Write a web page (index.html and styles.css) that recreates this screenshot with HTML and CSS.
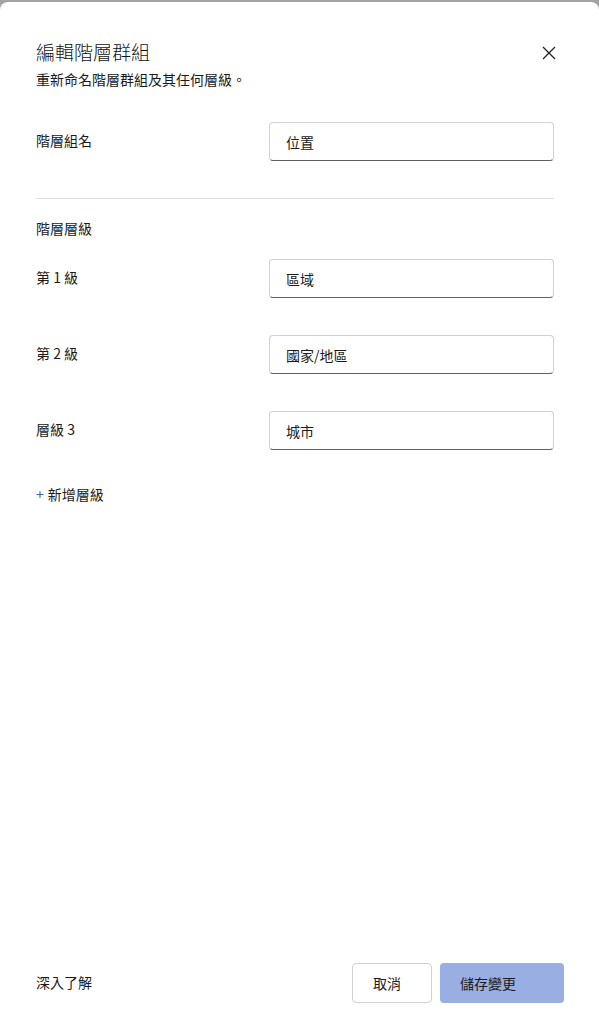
FILE: index.html
```html
<!DOCTYPE html>
<html lang="zh-Hant">
<head>
    <meta charset="UTF-8">
    <title>編輯階層群組</title>
    <link rel="stylesheet" href="styles.css">
</head>
<body>
    <div class="panel">
        <div class="kopf">
            <h1 class="tittel">編輯階層群組</h1>
            <button class="lukk" aria-label="關閉">
                <svg width="14" height="14" viewBox="0 0 14 14"><path d="M1 1L13 13M13 1L1 13" stroke="#222" stroke-width="1.3" fill="none"/></svg>
            </button>
        </div>
        <p class="under">重新命名階層群組及其任何層級。</p>

        <div class="rad forste">
            <label class="etikett">階層組名</label>
            <input class="felt" type="text" value="位置">
        </div>

        <hr class="skille">

        <div class="seksjon">階層層級</div>

        <div class="rad">
            <label class="etikett">第 1 級</label>
            <input class="felt" type="text" value="區域">
        </div>
        <div class="rad">
            <label class="etikett">第 2 級</label>
            <input class="felt" type="text" value="國家/地區">
        </div>
        <div class="rad">
            <label class="etikett">層級 3</label>
            <input class="felt" type="text" value="城市">
        </div>

        <div class="nyNiva"><span class="pluss">+</span>新增層級</div>

        <div class="fot">
            <span class="lesMer">深入了解</span>
            <div class="knapper">
                <button class="btnAvbryt">取消</button>
                <button class="btnLagre">儲存變更</button>
            </div>
        </div>
    </div>
</body>
</html>
```

FILE: styles.css
```css
html, body {
    margin: 0;
    height: 100%;
}

body {
    background-color: #a3a3a3;
    padding-top: 2px;
    box-sizing: border-box;
    font-family: "Noto Sans CJK TC", "Noto Sans", sans-serif;
    color: #1b1b1b;
    font-size: 14px;
}

/* selve dialogen */
.panel {
    background-color: #ffffff;
    border-radius: 8px 8px 0 0;
    height: 100%;
    box-sizing: border-box;
    padding: 0 45px 0 36px;
    display: flex;
    flex-direction: column;
}

.kopf {
    display: flex;
    justify-content: space-between;
    align-items: center;
    padding-top: 36px;
    height: 28px;
}

.tittel {
    margin: 0;
    font-size: 19px;
    font-weight: 300;
    line-height: 28px;
    color: #111;
}

.lukk {
    border: none;
    background: none;
    padding: 0;
    width: 14px;
    height: 14px;
    margin-right: -2px;
    margin-top: 2px;
    display: flex;
}

.under {
    margin: 3px 0 0 0;
    line-height: 20px;
}

.rad {
    display: flex;
    justify-content: space-between;
    align-items: center;
    margin-top: 38px;
}

.forste {
    margin-top: 33px;
}

.etikett {
    line-height: 20px;
    margin-top: -3px;
}

.felt {
    width: 285px;
    height: 39px;
    box-sizing: border-box;
    border: 1px solid #d1d1d1;
    border-bottom: 1px solid #616161;
    border-radius: 4px;
    padding: 0 16px;
    font-family: inherit;
    font-size: 14px;
    color: #1b1b1b;
}

.skille {
    border: none;
    border-top: 1px solid #e0e0e0;
    margin: 37px 0 0 0;
    width: 518px;
}

.seksjon {
    margin-top: 19px;
    line-height: 20px;
}

.rad + .rad {
    margin-top: 37px;
}

.seksjon + .rad {
    margin-top: 21px;
}

.nyNiva {
    margin-top: 34px;
    line-height: 20px;
}

.pluss {
    color: #3a5fcd;
    margin-right: 4px;
}

/* knapper nederst */
.fot {
    margin-top: auto;
    margin-bottom: 32px;
    margin-right: -10px;
    display: flex;
    justify-content: space-between;
    align-items: center;
}

.lesMer {
    margin-top: -3px;
}

.knapper {
    display: flex;
    gap: 8px;
}

.btnAvbryt, .btnLagre {
    height: 40px;
    font-family: inherit;
    font-size: 14px;
    border-radius: 4px;
    color: #1b1b1b;
    text-align: left;
    padding: 0 0 0 20px;
}

.btnAvbryt {
    width: 80px;
    background-color: #ffffff;
    border: 1px solid #d1d1d1;
}

.btnLagre {
    width: 124px;
    background-color: #99aee3;
    border: none;
}
```
